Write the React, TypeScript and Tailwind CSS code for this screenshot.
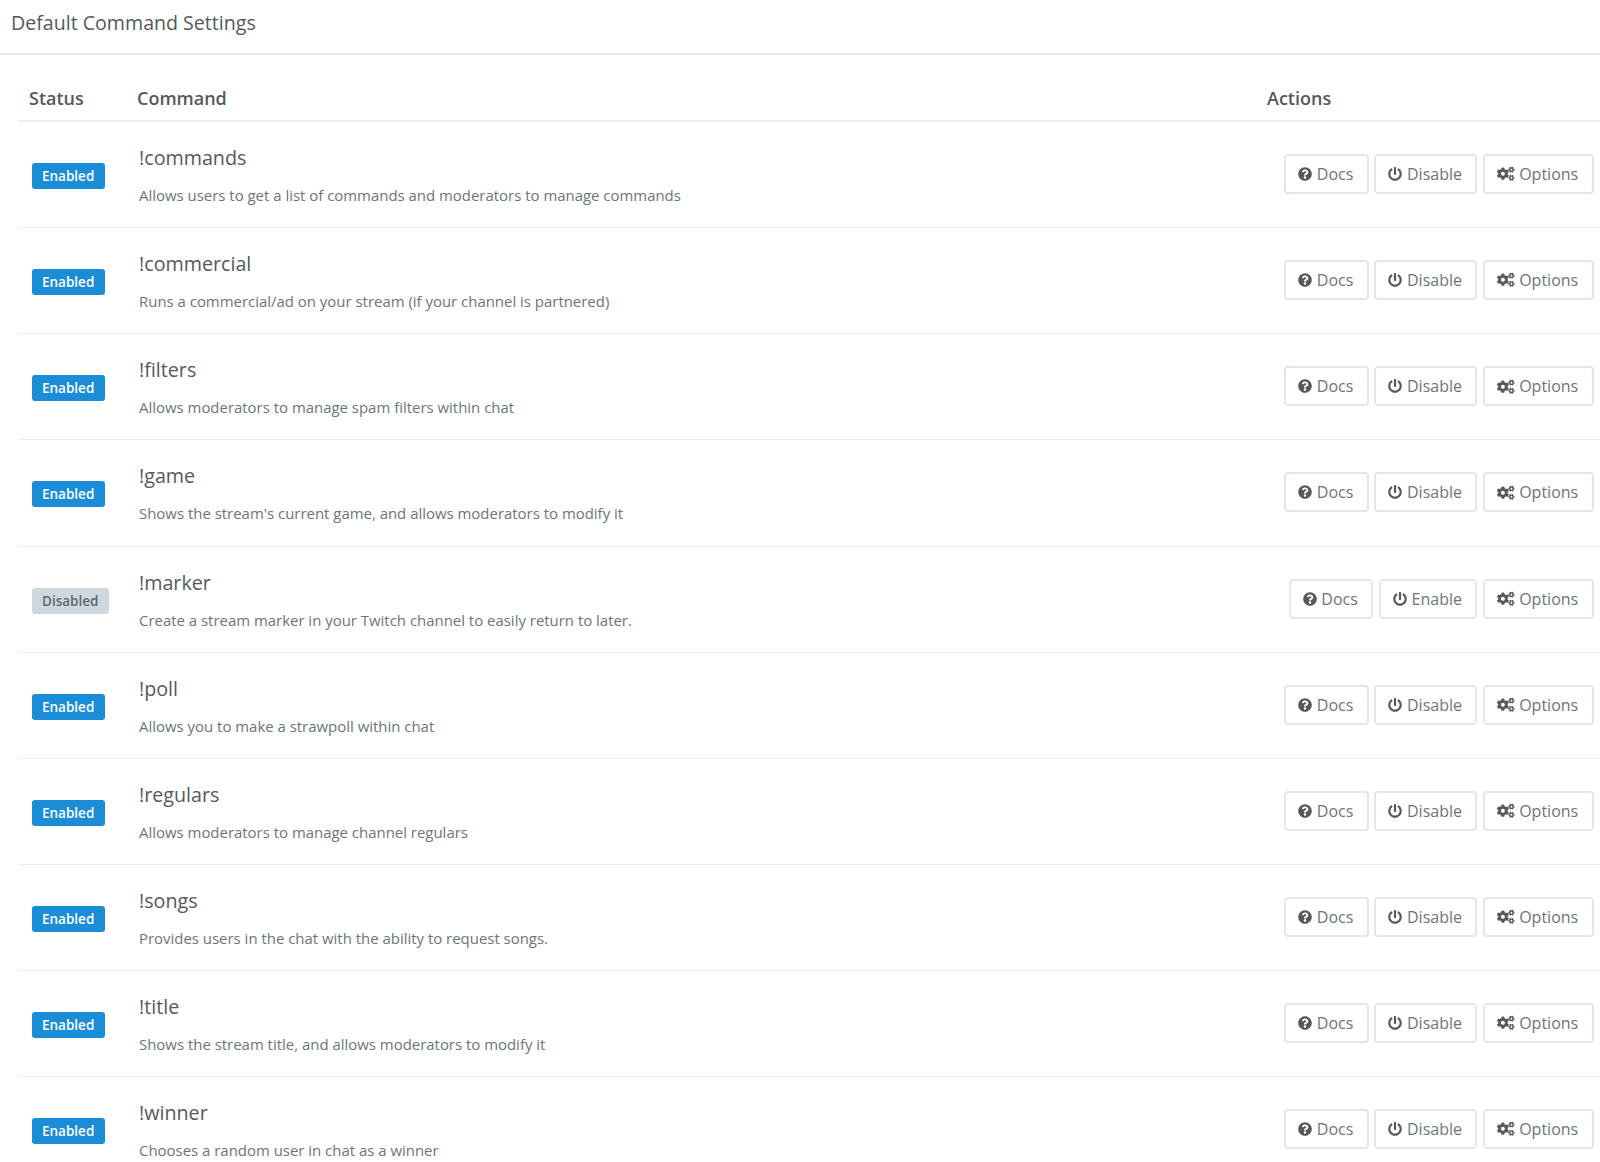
import { FaCogs, FaPowerOff, FaQuestionCircle } from "react-icons/fa"

const commands = [
  { name: "!commands", description: "Allows users to get a list of commands and moderators to manage commands", enabled: true },
  { name: "!commercial", description: "Runs a commercial/ad on your stream (if your channel is partnered)", enabled: true },
  { name: "!filters", description: "Allows moderators to manage spam filters within chat", enabled: true },
  { name: "!game", description: "Shows the stream's current game, and allows moderators to modify it", enabled: true },
  { name: "!marker", description: "Create a stream marker in your Twitch channel to easily return to later.", enabled: false },
  { name: "!poll", description: "Allows you to make a strawpoll within chat", enabled: true },
  { name: "!regulars", description: "Allows moderators to manage channel regulars", enabled: true },
  { name: "!songs", description: "Provides users in the chat with the ability to request songs.", enabled: true },
  { name: "!title", description: "Shows the stream title, and allows moderators to modify it", enabled: true },
  { name: "!winner", description: "Chooses a random user in chat as a winner", enabled: true },
]

function ActionButton({ icon, label }: { icon: React.ReactNode; label: string }) {
  return (
    <button className="flex h-10 items-center gap-[4.5px] rounded-[4px] border-2 border-[#e4e7ea] bg-white pl-3 pr-[13.5px] text-base text-[#6c757d]">
      <span className="text-[#55595c]">{icon}</span>
      {label}
    </button>
  )
}

export default function App() {
  return (
    <div className="h-[1162px] overflow-hidden bg-white font-['Open_Sans',sans-serif] text-[#55595c]">
      <div className="flex h-[55px] items-center border-b-2 border-[#e4e7ea] pb-2 pl-[11px] text-[19.6px] font-medium leading-none">
        Default Command Settings
      </div>

      <div className="ml-[18px]">
        <div className="flex h-[67px] items-end border-b-2 border-[#eceef0] pb-[10px] text-lg font-semibold leading-6">
          <div className="w-[119px] pl-[11px]">Status</div>
          <div className="flex-1">Command</div>
          <div className="w-[333px]">Actions</div>
        </div>

        {commands.map((command) => (
          <div key={command.name} className="flex h-[106.14px] items-center border-b border-[#eceef0]">
            <div className="w-[121px] pl-[14px] pt-[3px]">
              {command.enabled ? (
                <span className="inline-block rounded-[3px] bg-[#1b8dd6] py-[3px] pl-[10px] pr-[11px] text-[13.5px] font-semibold leading-5 text-white">
                  Enabled
                </span>
              ) : (
                <span className="inline-block rounded-[3px] bg-[#cfd8dd] py-[3px] pl-[10px] pr-[11px] text-[13.5px] font-semibold leading-5 text-[#5c6873]">
                  Disabled
                </span>
              )}
            </div>
            <div className="flex-1 pt-[2px]">
              <div className="text-[19.7px] leading-7">{command.name}</div>
              <div className="mt-[11px] text-[14.95px] leading-6 text-[#6c757d]">{command.description}</div>
            </div>
            <div className="mr-[6.3px] flex gap-[5.7px] pb-[1px]">
              <ActionButton icon={<FaQuestionCircle className="size-[14px]" />} label="Docs" />
              <ActionButton icon={<FaPowerOff className="size-[14px]" />} label={command.enabled ? "Disable" : "Enable"} />
              <ActionButton icon={<FaCogs className="size-[17.5px]" />} label="Options" />
            </div>
          </div>
        ))}
      </div>
    </div>
  )
}
